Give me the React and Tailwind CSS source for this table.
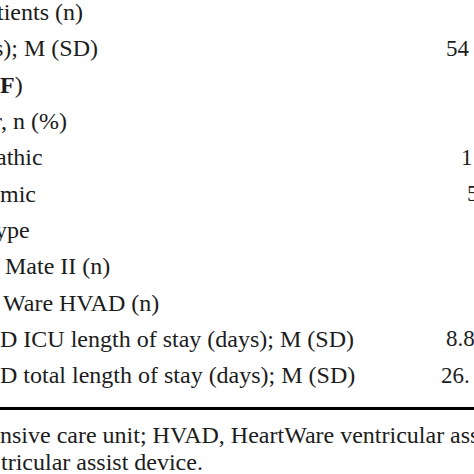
import React from 'react';

const rows = [
  { label: 'tients (n)', shift: '-ml-[3px]', value: '' },
  { label: 's); M (SD)', shift: '-ml-[6px]', value: '54', vpad: 'pl-[446px]' },
  { label: 'F)', shift: 'ml-0', value: '', bold: true },
  { label: 'r, n (%)', shift: '-ml-[6px]', value: '' },
  { label: 'athic', shift: '-ml-[4px]', value: '1', vpad: 'pl-[461px]' },
  { label: 'mic', shift: 'ml-0', value: '5', vpad: 'pl-[467px]' },
  { label: 'ype', shift: '-ml-[5px]', value: '' },
  { label: 'Mate II (n)', shift: 'ml-[5px]', value: '' },
  { label: 'Ware HVAD (n)', shift: 'ml-[3px]', value: '' },
  { label: 'D ICU length of stay (days); M (SD)', shift: 'ml-0', value: '8.8', vpad: 'pl-[446px]' },
  { label: 'D total length of stay (days); M (SD)', shift: 'ml-0', value: '26.', vpad: 'pl-[441px]' },
];

function App() {
  return (
    <div
      className="w-[474px] h-[474px] overflow-hidden bg-white text-[#1c1c1c] text-[24px] leading-none"
      style={{ fontFamily: '"Liberation Serif", "Times New Roman", serif' }}
    >
      <div className="-mt-[6px]">
        {rows.map((row, i) => (
          <div key={i} className="relative h-[36.3px] flex items-center whitespace-nowrap">
            <span className={row.shift}>
              {row.bold ? (
                <>
                  <b>F</b>)
                </>
              ) : (
                row.label
              )}
            </span>
            {row.value && (
              <span className={`absolute left-0 top-0 h-full flex items-center text-[23px] ${row.vpad}`}>
                {row.value}
              </span>
            )}
          </div>
        ))}
      </div>
      <div className="mt-[14px] h-[3px] bg-black" />
      <div className="pt-[12px] leading-[27px] whitespace-nowrap">
        <div>nsive care unit; HVAD, HeartWare ventricular assist</div>
        <div className="ml-[1px]">tricular assist device.</div>
      </div>
    </div>
  );
}

export default App;
